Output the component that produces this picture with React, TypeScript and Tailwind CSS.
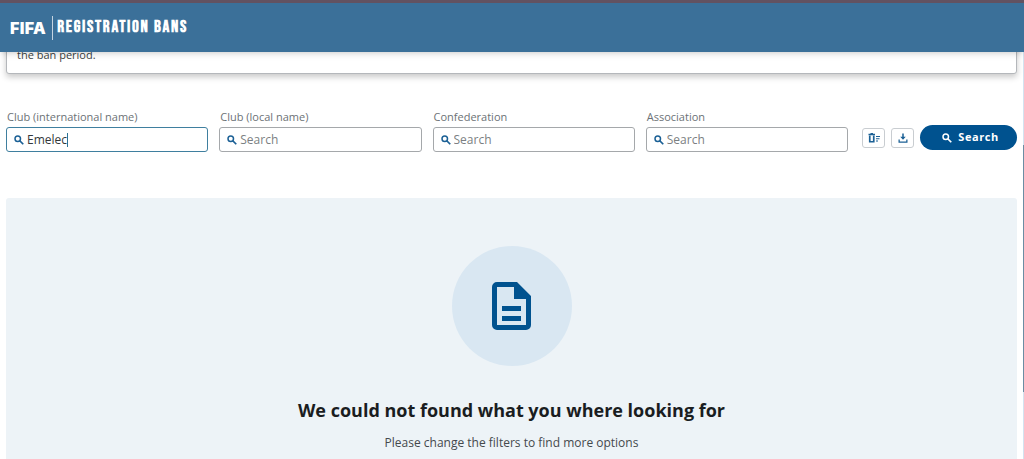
import { useState } from 'react';

const filters = [
  { id: 'international', label: 'Club (international name)', initial: 'Emelec' },
  { id: 'local', label: 'Club (local name)', initial: '' },
  { id: 'confederation', label: 'Confederation', initial: '' },
  { id: 'association', label: 'Association', initial: '' },
];

function SearchIcon() {
  return (
    <svg viewBox="0 0 20 20" className="size-2.5 shrink-0" fill="none" stroke="currentColor" aria-hidden="true">
      <circle cx="7.5" cy="7.5" r="5.5" strokeWidth="3" />
      <path d="m11.5 11.5 7 7" strokeWidth="3.4" />
    </svg>
  );
}

function ClearFiltersIcon() {
  return (
    <svg viewBox="0 0 24 20" className="h-2.5 w-3" fill="none" stroke="currentColor" aria-hidden="true">
      <path d="M1 3h13M5 1.5h5" strokeWidth="3" />
      <path d="M3.5 5v12.5h8V5" strokeWidth="3.4" />
      <path d="M16 7h8M16 11.5h7M16 16h4" strokeWidth="2.4" />
    </svg>
  );
}

function DownloadIcon() {
  return (
    <svg viewBox="0 0 20 20" className="size-2.5" fill="currentColor" aria-hidden="true">
      <path d="M8.5 1h3v6.5h4l-5.5 6-5.5-6h4V1Z" />
      <path d="M1 13h2.5v4h13v-4H19v6.5H1V13Z" />
    </svg>
  );
}

function DocumentIcon() {
  return (
    <svg viewBox="0 0 39 48" className="h-12 w-[39px]" aria-hidden="true">
      <path
        fill="#00528f"
        fillRule="evenodd"
        d="M5 0h20l14 14v29a5 5 0 0 1-5 5H5a5 5 0 0 1-5-5V5a5 5 0 0 1 5-5Zm0 5v38h29V17H22V5H5Zm5 19h19v5H10v-5Zm0 10h19v5H10v-5Z"
      />
    </svg>
  );
}

function FilterField({ id, label, initial }: { id: string; label: string; initial: string }) {
  const [value, setValue] = useState(initial);
  const active = initial !== '';

  return (
    <div className="min-w-0 flex-1">
      <label htmlFor={id} className="block truncate px-px text-[11px] leading-5 text-[#6c7276]">
        {label}
      </label>
      <div
        className={`relative flex h-[25px] items-center rounded-[3px] border bg-white pl-[7px] ${
          active ? 'border-[#3f7f9f]' : 'border-[#a5a8ab]'
        }`}
      >
        <span className="text-[#1b6095]">
          <SearchIcon />
        </span>
        <input
          id={id}
          value={value}
          placeholder="Search"
          onChange={(e) => setValue(e.target.value)}
          className="ml-[3px] w-full min-w-0 bg-transparent text-xs text-[#33383b] outline-none placeholder:text-[#7b7f82]"
        />
        {active && (
          <span className="pointer-events-none absolute left-5 flex items-center text-xs">
            <span className="invisible">{value}</span>
            <span className="h-3.5 w-px bg-[#2c7395]" />
          </span>
        )}
      </div>
    </div>
  );
}

export default function App() {
  return (
    <div className="relative min-h-screen bg-white font-['Open_Sans','Noto_Sans',sans-serif]">
      <header className="relative z-10 flex h-[52px] items-center border-t-[3px] border-[#625261] bg-[#3b7099] px-2.5 text-white shadow-md">
        <span className="font-['Inter',sans-serif] text-base font-black tracking-wide">FIFA</span>
        <span className="mx-1 ml-1.5 h-6 w-px bg-white/70" />
        <h1 className="font-['Bebas_Neue','Roboto_Condensed','Open_Sans_Condensed','Noto_Sans_Condensed','Roboto',sans-serif] text-[17px] font-bold tracking-widest">
          REGISTRATION BANS
        </h1>
      </header>

      <main className="pr-[7px] pl-1.5">
        <section className="-mt-2 rounded-[3px] border border-[#b4b7bb] bg-white px-2.5 pb-2 shadow-[0_3px_6px_rgba(0,0,0,0.22)]">
          <p className="text-[11px] leading-5 text-[#3b3f42]">the ban period.</p>
        </section>

        <form className="mt-[33px] flex items-end gap-3.5" onSubmit={(e) => e.preventDefault()}>
          <div className="flex min-w-0 flex-1 gap-[11px]">
            {filters.map((filter) => (
              <FilterField key={filter.id} {...filter} />
            ))}
          </div>
          <div className="mb-0.5 flex items-center gap-1.5">
            <button
              type="button"
              aria-label="Clear filters"
              className="flex h-5 w-[23px] items-center justify-center rounded-[3px] border border-[#c9cdd1] text-[#1b6095]"
            >
              <ClearFiltersIcon />
            </button>
            <button
              type="button"
              aria-label="Download"
              className="flex h-5 w-[23px] items-center justify-center rounded-[3px] border border-[#c9cdd1] text-[#1b6095]"
            >
              <DownloadIcon />
            </button>
            <button
              type="submit"
              className="flex h-[25px] w-[97px] items-center justify-center gap-1.5 rounded-full bg-[#00528f] pl-1 text-[11px] font-bold tracking-wider text-white"
            >
              <SearchIcon />
              Search
            </button>
          </div>
        </form>

        <section className="mt-[46px] flex flex-col items-center rounded-t-[3px] bg-[#edf3f7] px-4 pt-12 pb-1.5 text-center">
          <div className="flex size-[120px] items-center justify-center rounded-full bg-[#d9e7f2]">
            <DocumentIcon />
          </div>
          <h2 className="mt-8 text-lg leading-6 font-bold text-[#1a1d1f]">
            We could not found what you where looking for
          </h2>
          <p className="mt-[11px] text-xs leading-5 text-[#44494d]">
            Please change the filters to find more options
          </p>
        </section>
      </main>

      <div className="absolute top-[52px] right-0 bottom-0 w-px bg-[#d3e3f0]">
        <div className="mt-[93px] h-[247px] bg-[#6b8da3]" />
      </div>
    </div>
  );
}
